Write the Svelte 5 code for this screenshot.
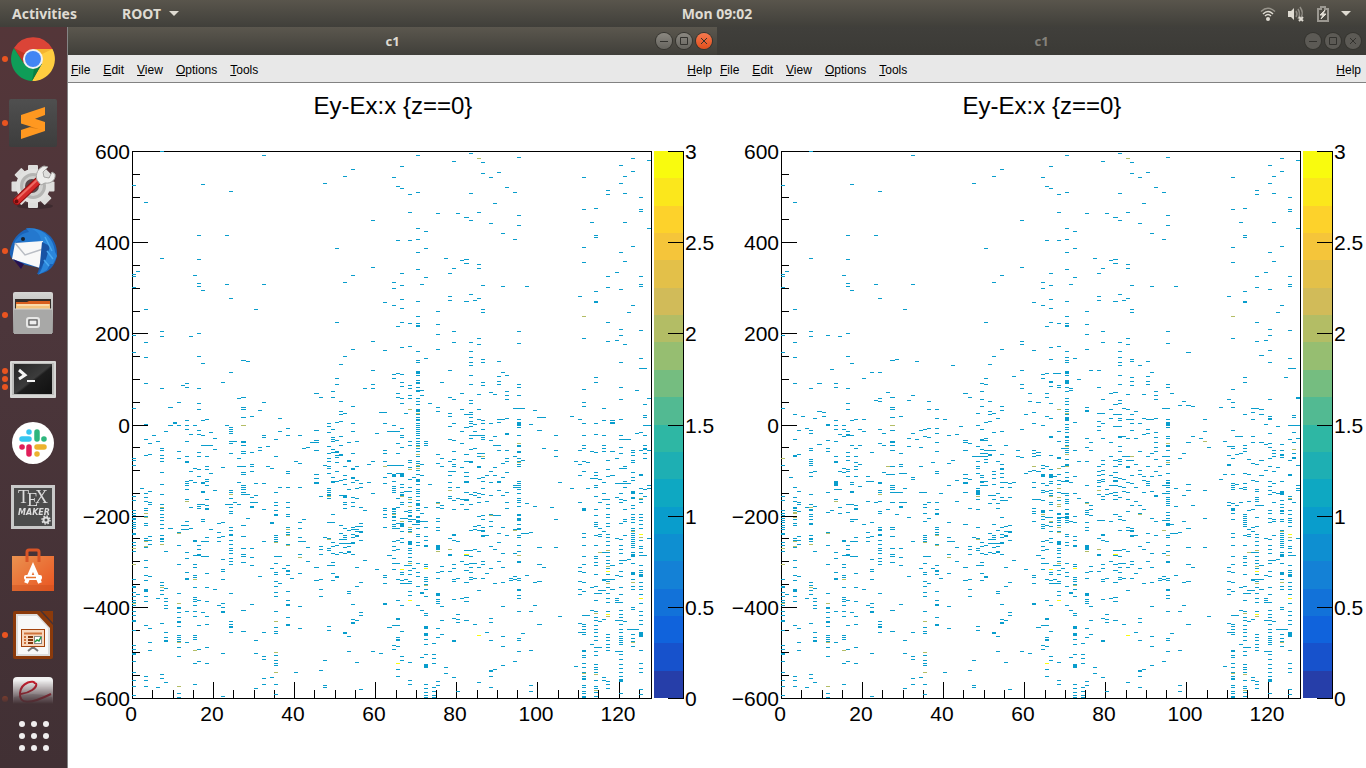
<script>
  const apps = [
    { name: 'Google Chrome', icon: 'chrome', windows: 1 },
    { name: 'Sublime Text', icon: 'sublime', windows: 1 },
    { name: 'Settings', icon: 'settings', windows: 0 },
    { name: 'Thunderbird Mail', icon: 'mail', windows: 1 },
    { name: 'Files', icon: 'files', windows: 1 },
    { name: 'Terminal', icon: 'terminal', windows: 3 },
    { name: 'Slack', icon: 'slack', windows: 0 },
    { name: 'Texmaker', icon: 'texmaker', windows: 0 },
    { name: 'Ubuntu Software', icon: 'software', windows: 0 },
    { name: 'LibreOffice Impress', icon: 'impress', windows: 1 },
    { name: 'Document Viewer', icon: 'viewer', windows: 1 }
  ];

  const menus = ['File', 'Edit', 'View', 'Options', 'Tools'];

  // Filled cells per x bin: rows counted down from the top of the frame.
  // No suffix is one entry, b is two entries, c is three.
  const bins = {
    0: '34 123 125 136 184 201 257 307 309 314 345 349 359 362 364 367 368 371 373 375 377 382 383 391 394 397b 400 413b 428 435 436 441 445 449 451 452b 454 460 464 469 470 479 494 498 502 503 510 521 529 535 544',
    1: '120 443',
    2: '337',
    3: '51 158 191 206 232 273 288 304 342 346 350 357 359 362b 365 366b 372 374 387 389 390b 395b 396 409 416 424 429 438 439 440 445 450 474 525 529 535',
    4: '292 303 340 351 353 385 389 393 425 477 491 499',
    5: '284',
    6: '290 447 536',
    7: '0 107 180 185 237 297 299 304 307 310 321 333 343 353 356b 357 359 363 366 369 373 377 384 387 388 390 393b 431 434 436b 439 443 472 523 527',
    8: '280 400 437 447 450 454 457 481 486 489 490 531',
    9: '256 274 377',
    10: '271 272',
    11: '251 274 300 307 381 382b 394 413 442 452b 456 457 461 466 470 471 475 484 486 488 490 491b 496 505 535b 542 546',
    12: '234 374 378',
    13: '232 236 269 274 278 290 305 310 311 330 332 334 338 348 350b 370 374 378 401 407 421 427 428 460 491',
    14: '185 283 320 329 356 377',
    15: '124 274 317 331 389 390 404 413 416 424 426 428b 436 446 448 450 454 460 465 484 486 488 499b 512 533',
    16: '84 108 132 135 182 205 237 252 258 279 283 301 305 318 325 353 355 357 394 398 403 404 449 474 498 510',
    17: '33 139 212 269 284 294 332 331 340 341 353 368 370 390 405 461',
    18: '268 294 305 315 318 328 330 334 348 354 357 358 386 390 405 422 436 450 465 473 496 512',
    19: '281 294 322 378',
    20: '287 298 339 438',
    21: '372 381 386 390 454',
    22: '231 316 371 385 408 418 420 428 452 456 460 461 502 545',
    23: '84 133 274 353',
    24: '40 147 221 276 278 280 282 290 292 302 339 341 343b 347 353 356 360 362 376 379 383 384 389 393 397 399 402 407 410 413 442 470 473 475 476 481',
    25: '290 351',
    26: '247 307 315 331 353',
    27: '209 246 256 258 266 274b 290 291 294 300 302 315 321 323 334 336 338 341 343 374 385 397 403 405 411 459 480',
    28: '210 343 367',
    29: '265 301 313 315 320 346 351 355 356 397 406 414 453',
    30: '158 332 344 351 489 502 537',
    31: '259 296 299 425',
    32: '4 133 251 284 286 332 358 390 481 505 508 527 533',
    33: '295 315',
    34: '317 371 372 417 526',
    35: '288 305 341 351 354 359 363 364 384 386 388 390 391b 405 412 421 423 430 435 441 445 460 470b 476 480 482 501b 504 509 512 514 521b 533 543',
    36: '267 280 336 405 432',
    37: '417',
    38: '277 284 320 322 336 351 356 363 365 376 378b 381 383 384b 393 394b 414 419 420 423 440 449 453 454 466 473 474',
    39: '427',
    40: '310 521',
    41: '284 312 336 371 377 386 390 403 406b 422 455 477',
    42: '297 368 390',
    43: '296 396 410',
    44: '291',
    45: '242 279 289 291 299 323 327 331 332 416 429',
    46: '246 345 395 398 403 428 438 445 519',
    47: '32 314 386 509 534 536',
    48: '272 275 281 295 302 307 310 315 317 322 337 339 341 343 344 345b 347 371 387 388b 397 399 414 475 479',
    49: '240 246 278 286 288 290 298 301 326 330 331 363 371 391 395 402 411 414 422 429',
    50: '97 171 227 233 271 289 300 301 304 306 311 320 330 394 403 425 426',
    51: '213 250 260 263 270 285 294 303 304 329 344 374 382 388 392 401',
    52: '25 131 205 262 315 324 328 333 344 345 346 351 353 357 377 384 386 388 392 396 402 481 482',
    53: '291 309 310 338 379 392 395 400 401 440 442 485 500',
    54: '18 124 198 255 272 280 302 317 318 326 327 331 346 351 355 376 378 383 386 391 392 403 453 468 471 472',
    55: '290 315 329 337 347 375 378 380 384 385 416 435 469 511',
    56: '332 336 356 372 375 380 381 389 431 461 464 538',
    57: '237 359 409',
    58: '313 331',
    59: '69 116 190 219 233 237 310 342 500',
    60: '282 418',
    61: '261 502',
    62: '151 199 261 272 299 302 310 315b 326 332 357 359 363 366 376 424 426 432 452 453',
    63: '280 314 322 404 476',
    64: '26 131 137 154 223 227 274 280 314 323 324 325 330 335 337 339 341 357 358 360 362 363b 365 366 369 373 375 377 390 395 399 407 412 418 474 494 498',
    65: '35 89 175 222 242 246 280 292 302 314 322 347 356 372 377 389 398 412 428 449 467 468 474 486 488 489 495 512c 518 525',
    66: '15 37 122 134 148 157 171 196 223 231 235 247 252 277 284 286 296 314 322 323 324 325 333 336 341 343 344 345b 351 353 367 370b 372 373 374 375 380 387 391 418c 421 423 429 432 454 480 505 509',
    67: '262 340 360 367 414 428 432',
    68: '43 61 89 172 195 234 237 244 247 258b 290 294 309 311 316 318b 328 336 340 346 348b 351 355b 359 361 364 365 368 370 376b 378 380 381b 390 391 392 393 397 399 402 406 410 412b 414 419 423 430 432 440 444 449c 511 529 533',
    69: '326 368 373 417',
    70: '4 41 77 88 101 118 150 165 172 174 175 200 209 211 220 221 222 224 229 231 232 236 239 240 247 250 253 258 259 260 262b 263 266 268 269 272 274 276 278 280 282 284 287 290 292 294 295b 297 300 303b 305 310 312 314b 315 317b 319 323 328 329 330 333 338 340 342 345 349 352 353 354 357 359 365 366 369 370 371 373 377 383 385 391 394 412 421 425 435 454',
    71: '133 239 244 313 324 362 370 441 442 459 506',
    72: '80 97 126 207 290 292 294 356 370 376 385 389 394 395 413 415 417c 426 428 430 433 434b 438 445 462 464 475 476 477 482 483 484 488 493 503 513 514 515 516 533 537 541 544 546',
    73: '252 333',
    74: '492 503 507 512 536 540 544 546',
    75: '62 160 173 183 198 256 260 303 312 351 352b 356 367 370 376 379 394 395 396 397 398 400b 421 427 442 443 444 448 450 452 477 486 530 534',
    76: '231 307 315 354 357 415 420 455 469 483',
    77: '107 516 522',
    78: '122 145 149 219 246 262 265 275 288 310 320 324 331 336 339b 345 347 387 398b 403 404 420',
    79: '10 117 180 191 248 272 289 300 308 313 315 320 349 358 383 384 389 413 417 428 430 448 467 489 490 526',
    80: '62 336 347 390 427 463 468 471 540',
    81: '109 242 258 280 292 316 348 353 410 447',
    82: '66 108 112 150 263 276 303 310 321 325 330 331 341 348 349 358 399 403c 404 413 419 431 446 450 469',
    83: '2 42 69 143 191 200 206 211 214 224 233 249 252 261 263 266 270 272 275 284 287 298 310 311 343 353 379 399 405 412 416 421 426 428',
    84: '149 273 280 284 297 341 344 375 378 398 412 427 473',
    85: '7b 61 113 117 147 187 193 243 258 268 284 302 305 315 316 327 342 346 351 365 374 379 400 416 439 484c 531',
    86: '11 22 134 158 161 208 211 231 234 269 272 278 284 286 288 302 305b 307 326 330 337 343 364 368 376 379 380 384 385 410 413 427',
    87: '324 350 384 422 481',
    88: '26 72 241 272 289 320 331 344 363 364b 370 375 395 417 467 471 489 519 520 525 536',
    89: '52 243 285 294 316 324 364 398 432 518',
    90: '21 210 225 230 233 268 271 294 299 330 331 339 364 382 391 410',
    91: '82 135 221 268 312 326 344 376 402 416 431 455 485 495 514',
    92: '36 224 240 244 248 267 282 283 299 307 310 321 341 351 357 384',
    93: '427 429',
    94: '41 88 257 305 334 336 378 379b 402 425 428 510',
    95: '6 64 74 180 192 233 236 244 257 268 271 272 273 274 276 284 292b 294 295 300 301 307 310 311b 313 315 330 332 334 336 338 342 347 349 351 355 363 364 367 368 369 373 377 378 384 386 394 400 404b 410 411 427 429 438 439 444 447 460 487 489 500',
    96: '257 309 382 482',
    97: '135 352 382 424',
    98: '273 381 460 499 534 540',
    99: '259 355 431 454',
    100: '266 279 396 413 430 473',
    101: '266 297 416',
    103: '356',
    104: '284 299 305 368 396',
    105: '331 465',
    108: '265 337',
    109: '310 515',
    110: '145 268 299 313 324 351 416 420 430 438 443 472 481',
    111: '26 58 96 111 165b 187 238 251 255 272 284 294 297 310 320 357 358 359 382 386 394 405 413 421 431 440 464 473 475 478 481 483 499 500 504 506 512 516 521 522b 525 527 528 534 536 540 542 545 546',
    112: '311 337 464',
    113: '71 300 327 436 459 493',
    114: '57 84 86 140 150 151 226 231 272 283 301 321 324 327 334 336 345 358 364 371 373 375 384 394 405 407 411 414 423 435 442 449 460 462b 466 469 474 478 481 485 489 496 500 504 513 516 518 521 523b 529 535 537 539b 541 545',
    115: '328 351 377 383 385 401b 439 442 470 496',
    116: '257 269 284 294 297 300 331 342 348 380 401 428 429 439 468 526 529',
    117: '39 43 125 136 171 190 309 318 325 348 353 357 363 366 372 375 383 386 390 394 399b 401 405 409 412 415b 417 420c 423 428 430 432b 436 442 447 451 460 463c 465b 483 486 489 493 496 499 530 533 537',
    118: '269 271 272 300 324 414 428 438',
    119: '121 189 307 332 346 387 424 447 449 451 469 500',
    120: '14 32 101 138 178 184 211 236 248 268 284 288 296 302 317 332 342 348 351 372 388 394 398 402 409 412 420 425 436 443 451 459 463 466 469 473 478 481 485 487 489 491 493 500 503 508 513 517 521 525 528 529 530 542',
    121: '25 42 71 110 193 288 315 317 330 332 336 349 358 368 370 384 409 470',
    122: '161 288 332 408 478',
    123: '7 20 95 154 299 301 304 309 311 321 326 329 340 341 342 346 347 354 357 363 366 368 371 377 379 380b 382 384 386 388 390 392 394 396 401 403 404 405 412 421 422 423 428 431b 435 438 456 458 478 483 487 490 491b 495',
    124: '239 282 478',
    125: '46 58 60 125 133 135 179 207 217 281 299 323 324 337 342 347b 348 351 363 366 369 373 377 383c 386b 389 395 397 401 404 414 419 421 423 424 425 431 435 438 443 447c 452 460 464 469 473 481 482 483 484 485 499 512 517 521 538 543',
    126: '217 253 264 266 274 284 294 297 298 302 307 338 345 404',
    127: '9 77 247 274 299 334 337 387'
  };

  // The second run differs from the first one between these rows
  const changed = { from: 179, to: 378 };
  const changedBins = {
    0: '184 201 257 307b 314 345 349 359 362 364 367 369 371 374 376 378',
    2: '326',
    3: '191 206 232 263 288 304 305 336 346 350 356 357 359 361b 362b 366b 368 372 374',
    4: '279 303 340 351 353 360',
    5: '265',
    6: '277 356',
    7: '180 185 237 279 282 297 299 308 310 312 314 321 325 343 353 356b 358 359 363 365 368 372 373',
    8: '267 320 355',
    9: '232 260 293',
    10: '261 265',
    11: '184 273 274 289 297 300 341 361',
    12: '218 359',
    13: '232 236 269 274 278 290 305 310 311 330 331 332 333 334 338 348 350b',
    14: '185 283 320 338 356 362',
    15: '274 278 285 317 321',
    16: '182 205 237 252 258 280 283 284 301 305 309 318 320 325 353 361',
    17: '212 269 284 294 331 333 340 341 353 368 370',
    18: '268 297 305 311 315 318 325 354 357 358 368',
    19: '278 294 313 335',
    20: '227 268 280 373',
    21: '325 330 350',
    22: '221 301 330 371',
    23: '249 351',
    24: '221 247 250 278 292 331 332 339 341 343b 350 360 362 376 378',
    25: '282 294 321',
    26: '241 315b 323 358',
    27: '209 246 256 258 266 274b 279 290 291 294 299 315 323 334 336 338 341 351 376 378',
    28: '208 341 363',
    29: '265 302 313 315 322 341 351 355 356',
    30: '322 337 351',
    31: '249 287 295 366',
    32: '244 282 326 328',
    33: '210 288',
    34: '279 296 315 341',
    35: '278 285 341 353 356 362 370',
    36: '250 258 277 286 351 367',
    37: '311',
    38: '258 267 277 282 291 300 320 322 351 358 362 363 376 378',
    39: '342',
    40: '268',
    41: '284 312 334 371',
    42: '214 309',
    43: '283 329 350',
    44: '275',
    45: '242 289 291 299 323 327 331 332 341 373',
    46: '246 292 328 357',
    47: '305',
    48: '262 274 295 305 310 315 317 322 337 339 340 341 342 343 345b 348 358 376',
    49: '232 240 248 255 278 288 289 298 302 305 324 326 330 331 334',
    50: '227 233 271 287 289 299 302 305 308 311 330 334',
    51: '213 250 260 263 270 294 299 303 304 344 352',
    52: '205 262 281 299 320 323 327 333 344 348 373',
    53: '267 310 342 352 357',
    54: '198 255 259 280 303 313 317 318 322 326 331 336 346 349 366 376',
    55: '294 331 349 375',
    56: '332 336 346 374',
    57: '225 331',
    58: '299 305',
    59: '190 193 219 233 237 278 306',
    60: '263 322',
    61: '242 250 320',
    62: '199 261 272 299 302 305 315b 319 331 336 348 357 360 362 370',
    63: '251 301 304 320 348',
    64: '223 227 274 314 317 323 324 325 332 339 341 349 359 360 361 363b 365 368 373 375 377',
    65: '222 242 246 265 315 334 340 366 374',
    66: '196 208 230 231 235 252 267 285 286 304 318 323 324 325 326 330 332 339 342 344 345b 351 353 359 366 370b 371 375',
    67: '222 325',
    68: '195 222 234 236 258b 280 290 306 307 317b 323 329 333 337b 341 346b 349 353b 355b 362 363 366 367 369 371 374 376b',
    69: '297 315 330 342 366',
    70: '200 206 209 211 220 221 222 224 229 230 231 232 236 240 247 250 253 258 260 262b 263 266 267 268 269 273 276 278 281 285 286 289 291 294 295b 297 299 301 303b 308 313 314 315b 321 326 329 330 342 344 348 350 352 358 362 363 365 366 367 369 371',
    71: '237 239 331 370',
    72: '207 271 299 325 342 365 371',
    73: '228 310 347',
    75: '183 198 256 259 260 287 296 310 334 351 352b 359 361 363 371 376',
    76: '219 291 299 354 358 364',
    78: '219 236 262 270 275 279 315 320 324 329 331 335 339b 343 369',
    79: '180 191 248 262 272 287 309 313 319 323 328 330 345 348 369',
    80: '338 343',
    81: '242 258 267 291 305 324 334 342 370',
    82: '241 253 263 275 309 315 321 326 329 330 334 341 344 348 363',
    83: '191 200 206 211 214 224 233 249 252 263 267 269 275 285 286 295 300 308 310 313 327 335 346 365 368',
    84: '257 285 305 328 336 340 369',
    85: '187 193 243 258 268 287 305 309 315 316 331 341 348 360 376',
    86: '208 210 226 230 234 263 268 272 279 305b 309 324 332 354 377',
    87: '260 287 313 336 350',
    88: '214 272 300 319 323 354 362 363b',
    89: '243 267 283 325 329 341 358',
    90: '210 225 230 233 268 278 282 305 315 330 332 334',
    91: '221 268 302 325 340 367',
    92: '240 244 248 267 281 286 291 296 300 308 320 344 345 370',
    93: '315 324',
    94: '257 305 334 342 369',
    95: '180 192 233 236 257 268 271 272 273 274 276 285 287 292b 294 295 299 305 309 311b 313 322 329 331 332 334 336 340 342 346 348 350 352 354 361 364 367 369 372 373 374',
    96: '242 373',
    97: '337 355',
    98: '254 307',
    99: '250 302 344 370',
    100: '201 254 291 333 339 377',
    101: '255 285 354',
    103: '287',
    104: '268 280 290b 339 367',
    105: '296',
    108: '256 328',
    109: '290 323',
    110: '248 295 304 313 314 351 354',
    111: '187 238 251 256 279 295 297 307 323 332 334 336 338 352 357 358 359 362 368',
    112: '285 303 333 354',
    113: '285 302 337 351',
    114: '226 231 263 294 297 300 322 332 336 338 363 365 367 369 371 373 375',
    115: '308 323 350 359 378',
    116: '257 261 268 285 291 312 329 358 376',
    117: '190 257 313 330 338 340 346 348 350 354 366 375',
    118: '204 258 263 291 309 324 354',
    119: '189 273 293 319',
    120: '184 199 211 248 265 267 268 282 292 296 307 315 330 335 339 343 359 362 367 371',
    121: '299 302 305 320 332 341 351 368 370',
    122: '275 316 342',
    123: '293 299 303 304 306 330 340 341 342 343 349 353 356 359 360 362 368 370',
    124: '226',
    125: '179 207 217 274 288 309 323 324 345 347b 348 359 363 367 369 371 375',
    126: '217 264 266 274 281 291 298b 302 306 307 351',
    127: '246 247 274 287 314 334 337 339'
  };

  const secondBins = {};
  for (const bin of Object.keys(bins)) {
    const kept = bins[bin].split(' ').filter((row) => parseInt(row) < changed.from || parseInt(row) > changed.to);
    const added = changedBins[bin] ? changedBins[bin].split(' ') : [];
    secondBins[bin] = [...kept, ...added].join(' ');
  }

  const frame = { x: 64, y: 68, w: 519, h: 547 };
  const barX = 586;

  // ROOT's kBird palette
  const stops = [
    [53, 42, 135], [15, 92, 221], [20, 129, 214], [6, 164, 202], [46, 183, 164],
    [135, 191, 119], [209, 187, 89], [254, 200, 50], [249, 251, 14]
  ];

  function palette(level) {
    const t = ((level + 1) / 20) * 8;
    const i = Math.min(Math.floor(t), 7);
    const mix = stops[i].map((v, k) => Math.round(v + (stops[i + 1][k] - v) * (t - i)));
    return `rgb(${mix.join(', ')})`;
  }

  const bands = Array.from({ length: 20 }, (_, i) => {
    const top = Math.round((frame.h * (19 - i)) / 20);
    const bottom = Math.round((frame.h * (20 - i)) / 20);
    return { y: frame.y + top, h: bottom - top, fill: palette(i) };
  });

  // One path per count keeps the node total low
  function cellPath(data, suffix) {
    let d = '';
    for (const [bin, rows] of Object.entries(data)) {
      const left = Math.round((bin * frame.w) / 128);
      const right = Math.round(((+bin + 1) * frame.w) / 128);
      for (const row of rows.split(' ')) {
        if (row.replace(/\d/g, '') !== suffix) continue;
        d += `M${frame.x + left} ${frame.y + parseInt(row)}h${right - left}v1h${left - right}z`;
      }
    }
    return d;
  }

  function cellsOf(data) {
    return [
      { d: cellPath(data, ''), fill: palette(6) },
      { d: cellPath(data, 'b'), fill: palette(13) },
      { d: cellPath(data, 'c'), fill: palette(19) }
    ];
  }

  const canvases = [
    { id: 1, title: 'c1', active: true, cells: cellsOf(bins) },
    { id: 2, title: 'c1', active: false, cells: cellsOf(secondBins) }
  ];

  const yTicks = Array.from({ length: 25 }, (_, i) => ({
    y: frame.y + Math.round((frame.h * i) / 24),
    major: i % 4 === 0,
    label: String(600 - i * 50).replace('-', '−')
  }));
  const xTicks = Array.from({ length: 26 }, (_, i) => ({
    x: frame.x + Math.round((frame.w * i * 5) / 128),
    major: i % 4 === 0,
    label: i * 5
  }));
  const zTicks = Array.from({ length: 7 }, (_, i) => ({
    y: frame.y + Math.round((frame.h * i) / 6),
    label: 3 - i * 0.5
  }));
</script>

{#snippet appIcon(icon)}
  <svg class="icon" viewBox="0 0 48 48" aria-hidden="true">
    {#if icon === 'chrome'}
      <path d="M5 13A22 22 0 0 1 43.5 14H24L15.3 29Z" fill="#db4437" />
      <path d="M43.5 14A22 22 0 0 1 23 46L32.7 29L24 14Z" fill="#ffcd40" />
      <path d="M5 13A22 22 0 0 0 23 46L32.7 29H15.3Z" fill="#0f9d58" />
      <path d="M5 13L15.3 29L17 19Z" fill="#a52714" opacity=".5" />
      <path d="M24 14H43.5L33 19Z" fill="#ea9c20" opacity=".5" />
      <path d="M32.7 29L23 46L25 34Z" fill="#055524" opacity=".4" />
      <circle cx="24" cy="24" r="10" fill="#f1f1f1" />
      <circle cx="24" cy="24" r="8" fill="#4285f4" />
    {:else if icon === 'sublime'}
      <rect width="48" height="48" rx="2" fill="url(#slate)" />
      <path d="M12 31L36 23V32L12 40Z" fill="#ff9820" />
      <path d="M20 28.500L36 23L36 31Z" fill="#d77a12" />
      <path d="M36 8L12 16V24.500L36 32V23L26 19.700L36 16Z" fill="#ff9820" />
    {:else if icon === 'settings'}
      <ellipse cx="26" cy="43" rx="18" ry="3" fill="#2b2024" opacity=".5" />
      {#each [0, 45, 90, 135] as angle}
        <rect x="19" y="2" width="10" height="43" rx="1" fill="#dededc" transform="rotate({angle} 24 23.500)" />
      {/each}
      <circle cx="24" cy="23" r="17" fill="#e2e2e0" />
      <circle cx="24" cy="23" r="11.500" fill="#d0d0ce" stroke="#b4b4b2" stroke-width="3" />
      <circle cx="23" cy="23" r="7" fill="#57474a" />
      <path d="M8 38L29 18" stroke="#8f1010" stroke-width="8" stroke-linecap="round" />
      <path d="M8 38L29 18" stroke="#d52a2a" stroke-width="6" stroke-linecap="round" />
      <path d="M9 35L27 18" stroke="#ee6a62" stroke-width="2" stroke-linecap="round" />
      <path d="M28 17C26 11 29 5 35 3L39 4L34 9L35 14L40 15L43 9L46 11C47 17 42 21 36 20L32 22Z" fill="#ededeb" stroke="#a5a5a3" />
      <circle cx="7.500" cy="38.500" r="2" fill="#6d0d0d" />
    {:else if icon === 'mail'}
      <path d="M1 24C3 13 9 5 18 2C32 -1 48 9 48 26C48 37 40 47 28 47L31 41L8 36C3 33 0 29 1 24Z" fill="#1b63b8" />
      <path d="M19 1C35 1 45 12 46 25L48 29L44 37L41 37L38 43L29 48C37 39 37 22 27 13Z" fill="#2b86da" />
      <path d="M5 16C9 9 14 6 20 5L17 1C26 1 31 7 32 13L22 17L10 14Z" fill="#2478ce" />
      <path d="M6 16L34 14L31 41L3 32Z" fill="#f8f8f8" />
      <path d="M6 16L16 28L34 22" fill="none" stroke="#b9bdc4" stroke-width="1.500" />
      <path d="M4 32L15 37L12 42Z" fill="#27104f" />
      <path d="M33 15L41 19L37 32L29 46L31 36Z" fill="#1853a4" />
      <path d="M36 10L43 24M38 24L44 32M35 33L40 39" stroke="#4aa8ef" stroke-width="1.500" />
      <circle cx="14" cy="12" r="2" fill="#17212e" />
    {:else if icon === 'files'}
      <path d="M4 3Q4 1 6 1H42Q44 1 44 3V42H4Z" fill="url(#metal)" />
      <rect x="6" y="8" width="36" height="13" fill="#342d29" />
      <path d="M7 11H18L20 10H41V20H7Z" fill="#d95f1e" />
      <path d="M7 13H41V18H7Z" fill="#f5c37c" />
      <path d="M8 14H40" stroke="#fff2d9" stroke-width="1" />
      <path d="M5 18H43L43 43H5Z" fill="#a8a8a7" />
      <path d="M5 18H43" stroke="#d4d4d3" />
      <rect x="18" y="27" width="12" height="9" rx="2" fill="#bdbdbc" stroke="#e7e7e6" stroke-width="2" />
      <rect x="20" y="29" width="8" height="5" fill="#eee" stroke="#4b4b4b" />
    {:else if icon === 'terminal'}
      <rect x="1" y="6" width="46" height="37" rx="1" fill="#d7d7d5" />
      <rect x="3" y="8" width="42" height="32" fill="#bcbcba" />
      <rect x="5" y="9" width="38" height="30" fill="url(#screen)" />
      <path d="M10 15L16 20L10 24" fill="none" stroke="#f4f4f4" stroke-width="3" />
      <path d="M18 26H26" stroke="#f4f4f4" stroke-width="2" />
    {:else if icon === 'slack'}
      <circle cx="24" cy="24" r="21" fill="#fff" />
      <g fill="none" stroke-width="5.500" stroke-linecap="round">
        <path d="M13 20H20M20 13V13.100" stroke="#36c5f0" />
        <path d="M28 13V20M35 20H34.900" stroke="#2eb67d" />
        <path d="M28 28H35M28 35V34.900" stroke="#ecb22e" />
        <path d="M20 28V35M13 28H13.100" stroke="#e01e5a" />
      </g>
    {:else if icon === 'texmaker'}
      <rect x="2" y="2" width="44" height="44" fill="#c9c9c9" />
      <rect x="5" y="5" width="38" height="38" fill="#4c4c4c" />
      <text class="tex" x="9" y="20">T</text>
      <text class="tex" x="18" y="23">E</text>
      <text class="tex" x="26" y="20">X</text>
      <text class="maker" x="9" y="32">MAKER</text>
      <circle cx="37" cy="37" r="2.500" fill="none" stroke="#ddd" stroke-width="2" />
      <circle cx="37" cy="37" r="4" fill="none" stroke="#ddd" stroke-width="1.500" stroke-dasharray="1.500 1.640" />
    {:else if icon === 'software'}
      <path d="M3 9H45V44H3Z" fill="url(#bag)" />
      <path d="M3 38H45V44H3Z" fill="#c9501f" opacity=".4" />
      <path d="M18 15V5Q18 3 20 3H28Q30 3 30 5V15" fill="none" stroke="#d85426" stroke-width="3" />
      <path d="M17 36L24 20L31 36" fill="none" stroke="#fff" stroke-width="4" />
      <rect x="15" y="28" width="18" height="5" rx="2" fill="#fff" />
      <path d="M17 30.500H27" stroke="#e9722e" stroke-width="1.500" />
    {:else if icon === 'impress'}
      <path d="M6 0H31L44 14V46Q44 48 42 48H6Q4 48 4 46V2Q4 0 6 0Z" fill="#8b3a0b" />
      <path d="M33 0H44V12Z" fill="#8b3a0b" />
      <path d="M7 3H28L41 17V45H7Z" fill="#dcdcdc" />
      <path d="M9 5H28L39 17V43H9Z" fill="#f8f8f8" />
      <path d="M24 35V38M24 36L19 40M24 36L29 40" stroke="#777" stroke-width="2" />
      <rect x="12.500" y="18.500" width="23" height="17" fill="#f8d7bd" stroke="#a3430d" />
      <path d="M15 22.500H33" stroke="#d0743d" stroke-width="2" />
      <path d="M15 26H17M15 29H17M15 32H17" stroke="#d0743d" stroke-width="2" />
      <path d="M19 26H24M19 29H24M19 32H24" stroke="#81360c" stroke-width="2" />
      <rect x="25.500" y="25.500" width="7" height="7" fill="#fff" stroke="#888" />
      <path d="M26 31L28 29L30 30L32 26" fill="none" stroke="#1c9a3e" stroke-width="1.500" />
    {:else}
      <rect x="4" y="2" width="40" height="44" rx="4" fill="#f2f2f2" />
      <path d="M5 22Q24 16 43 22V42H5Z" fill="#cfcfcf" />
      <path d="M26 9C26 4 12 7 11 18C10 29 20 30 42 19" fill="none" stroke="#cb1b2c" stroke-width="2" />
      <path d="M12 19C20 18 29 13 27 8" fill="none" stroke="#cb1b2c" stroke-width="2" />
    {/if}
  </svg>
{/snippet}

<div class="desktop">
  <!-- Shared gradients for the dock icons -->
  <svg class="defs" width="0" height="0" aria-hidden="true">
    <linearGradient id="slate" x2="0" y2="1"><stop stop-color="#4f4f4f" /><stop offset="1" stop-color="#3d3d3d" /></linearGradient>
    <linearGradient id="metal" x2="0" y2="1"><stop stop-color="#d6d6d4" /><stop offset="1" stop-color="#8f8f8e" /></linearGradient>
    <linearGradient id="screen" x2="1" y2="1"><stop stop-color="#252525" /><stop offset=".5" stop-color="#3c3c3c" /><stop offset=".55" stop-color="#1d1d1d" /><stop offset="1" stop-color="#111" /></linearGradient>
    <linearGradient id="bag" x2="1" y2="1"><stop stop-color="#ea9250" /><stop offset="1" stop-color="#ea5420" /></linearGradient>
  </svg>

  <header class="panel">
    <div class="panel-left">
      <button class="panel-button">Activities</button>
      <button class="panel-button">
        ROOT
        <svg width="10" height="5" viewBox="0 0 10 5" aria-hidden="true"><path d="M0 0H10L5 5Z" fill="currentColor" /></svg>
      </button>
    </div>
    <button class="panel-button">Mon 09:02</button>
    <button class="panel-button status" aria-label="System menu">
      <svg width="16" height="16" viewBox="0 0 16 16">
        <g fill="none" stroke="#dfdbd2" stroke-width="1.500">
          <path d="M1 5.500Q8 -1 15 5.500" opacity=".5" />
          <path d="M3 8Q8 3 13 8" />
          <path d="M5 10Q8 7 11 10" />
        </g>
        <circle cx="8" cy="13" r="2" fill="#dfdbd2" />
      </svg>
      <svg width="18" height="16" viewBox="0 0 18 16">
        <path d="M1 5H4L7 2V14L4 11H1Z" fill="#dfdbd2" />
        <path d="M9 5Q11 8 9 11M11 3Q14 8 11 13M13 1Q17 7 14 11" fill="none" stroke="#dfdbd2" opacity=".45" stroke-width="1.500" />
        <path d="M12 11L16 15M16 11L12 15" stroke="#dfdbd2" stroke-width="2" />
      </svg>
      <svg width="14" height="16" viewBox="0 0 14 16">
        <path d="M2 3H5V1H9V3H12V15H2Z" fill="none" stroke="#9b9891" stroke-width="2" />
        <path d="M9 4L4 9H7L5 13L10 8H7Z" fill="#dfdbd2" stroke="#dfdbd2" />
      </svg>
      <svg width="10" height="5" viewBox="0 0 10 5"><path d="M0 0H10L5 5Z" fill="#dfdbd2" /></svg>
    </button>
  </header>

  <div class="workspace">
    <nav class="dock">
      <div class="apps">
        {#each apps as app}
          <button class="app" aria-label={app.name}>
            <span class="dots">
              {#each Array(app.windows) as _}<i></i>{/each}
            </span>
            {@render appIcon(app.icon)}
          </button>
        {/each}
      </div>
      <button class="show-apps" aria-label="Show Applications">
        {#each Array(9) as _}<i></i>{/each}
      </button>
    </nav>

    {#each canvases as canvas (canvas.id)}
      <section class="window" class:active={canvas.active}>
        <div class="titlebar">
          <h1>{canvas.title}</h1>
          <div class="controls">
            <button aria-label="Minimize"><svg viewBox="0 0 16 16"><path d="M4 8.500H12" /></svg></button>
            <button aria-label="Maximize"><svg viewBox="0 0 16 16"><path d="M4.500 4.500H11.500V11.500H4.500Z" /></svg></button>
            <button class="close" aria-label="Close"><svg viewBox="0 0 16 16"><path d="M5 5L11 11M11 5L5 11" /></svg></button>
          </div>
        </div>

        <div class="menubar">
          {#each menus as menu}
            <button><u>{menu[0]}</u>{menu.slice(1)}</button>
          {/each}
          <button class="help"><u>H</u>elp</button>
        </div>

        <svg class="plot" viewBox="0 0 649 685" role="img" aria-label="Ey-Ex:x histogram">
          <text x="325" y="31" class="title">Ey-Ex:x {'{z==0}'}</text>

          <g shape-rendering="crispEdges">
            <!-- Axes and frame -->
            <path
              d="M{frame.x} {frame.y}h{frame.w + 1}v{frame.h + 1}h{-frame.w - 1}zm1 1v{frame.h - 1}h{frame.w - 1}v{1 - frame.h}z"
              fill="#000"
              fill-rule="evenodd"
            />
            {#each yTicks as tick}
              <rect x={frame.x} y={tick.y} width={tick.major ? 16 : 8} height="1" />
            {/each}
            {#each xTicks as tick}
              <rect x={tick.x} y={frame.y + frame.h - (tick.major ? 16 : 8)} width="1" height={tick.major ? 16 : 8} />
            {/each}

            {#each canvas.cells as cell}
              <path d={cell.d} fill={cell.fill} />
            {/each}

            <!-- Colour scale -->
            {#each bands as band}
              <rect x={barX} y={band.y} width="29" height={band.h} fill={band.fill} />
            {/each}
            <rect x={barX + 29} y={frame.y} width="1" height={frame.h + 1} />
            {#each zTicks as tick}
              <rect x={barX + 14} y={tick.y} width="16" height="1" />
            {/each}
          </g>

          {#each yTicks as tick}
            {#if tick.major}
              <text x="62" y={tick.y + 8} class="label end">{tick.label}</text>
            {/if}
          {/each}
          {#each xTicks as tick}
            {#if tick.major}
              <text x={tick.x - 1} y="638" class="label middle">{tick.label}</text>
            {/if}
          {/each}
          {#each zTicks as tick}
            <text x="617" y={tick.y + 8} class="label">{tick.label}</text>
          {/each}
        </svg>
      </section>
    {/each}
  </div>
</div>

<style>
  :global(body) {
    margin: 0;
  }

  button {
    margin: 0;
    padding: 0;
    border: 0;
    background: none;
    color: inherit;
    font: inherit;
  }

  .desktop {
    display: flex;
    flex-direction: column;
    height: 100vh;
    background: #fff;
    font-family: "Liberation Sans", Arial, sans-serif;
  }

  .defs {
    position: absolute;
  }

  .panel {
    display: grid;
    grid-template-columns: 68px 1fr auto 1fr;
    align-items: center;
    flex: none;
    height: 27px;
    background: linear-gradient(#59554c, #403f3a);
    color: #dfdbd2;
    font: bold 14px "Noto Sans", sans-serif;
  }

  .panel-left {
    display: flex;
    grid-column: 1 / 3;
    gap: 45px;
    padding-left: 12px;
  }

  .panel-button {
    display: flex;
    align-items: center;
    gap: 8px;
  }

  .status {
    justify-self: end;
    gap: 11px;
    padding-right: 15px;
  }

  .workspace {
    display: grid;
    grid-template-columns: 68px 1fr 1fr;
    flex: 1;
    min-height: 0;
  }

  .dock {
    display: flex;
    flex-direction: column;
    min-height: 0;
    border-right: 1px solid #858585;
    background: linear-gradient(#543639, #4c363b 40%, #413034);
  }

  .apps {
    flex: 1;
    min-height: 0;
    overflow: hidden;
    mask-image: linear-gradient(#000 calc(100% - 24px), transparent);
  }

  .app {
    display: flex;
    align-items: center;
    width: 100%;
    height: 64px;
  }

  .dots {
    display: flex;
    flex-direction: column;
    align-items: center;
    gap: 2px;
    width: 9px;
  }

  .dots i {
    width: 6px;
    height: 6px;
    border-radius: 50%;
    background: #e95420;
  }

  .icon {
    width: 48px;
    height: 48px;
  }

  .tex {
    fill: #ddd;
    font: 18px "Liberation Serif", serif;
  }

  .maker {
    fill: #ddd;
    font: italic bold 8px "DejaVu Sans", sans-serif;
  }

  .show-apps {
    display: grid;
    grid-template-columns: repeat(3, 6px);
    flex: none;
    place-content: center;
    gap: 6px;
    height: 64px;
  }

  .show-apps i {
    height: 6px;
    border-radius: 50%;
    background: #f0eeee;
  }

  .window {
    min-width: 0;
    overflow: hidden;
  }

  .titlebar {
    display: grid;
    grid-template-columns: 1fr auto 1fr;
    align-items: center;
    height: 28px;
    background: linear-gradient(#403f3b, #3b3a36);
    color: #85827b;
  }

  .active .titlebar {
    background: linear-gradient(#5b574e, #403f3a);
    color: #dfdbd2;
  }

  .titlebar h1 {
    grid-column: 2;
    margin: 0;
    font: bold 13px "Noto Sans", sans-serif;
  }

  .controls {
    display: flex;
    justify-self: end;
    gap: 4px;
    padding-right: 5px;
  }

  .controls button {
    width: 16px;
    height: 16px;
    border-radius: 50%;
    background: #5c5a55;
    box-shadow: 0 0 0 1px #35342f;
  }

  .active .controls button {
    background: linear-gradient(#8b8881, #66645e);
  }

  .active .controls .close {
    background: linear-gradient(#f7794f, #e04f1c);
  }

  .controls svg {
    display: block;
    fill: none;
    stroke: #33322e;
  }

  .menubar {
    display: flex;
    align-items: center;
    gap: 13px;
    box-sizing: border-box;
    height: 28px;
    padding: 2px 5px 0 3px;
    border-bottom: 1px solid #828282;
    background: #e8e8e8;
    color: #000;
    font-size: 12px;
  }

  .menubar u {
    text-underline-offset: 1px;
  }

  .help {
    margin-left: auto;
  }

  .plot {
    display: block;
    width: 100%;
    height: auto;
  }

  .title {
    font-size: 24px;
    text-anchor: middle;
  }

  .label {
    font-size: 21px;
  }

  .end {
    text-anchor: end;
  }

  .middle {
    text-anchor: middle;
  }
</style>
